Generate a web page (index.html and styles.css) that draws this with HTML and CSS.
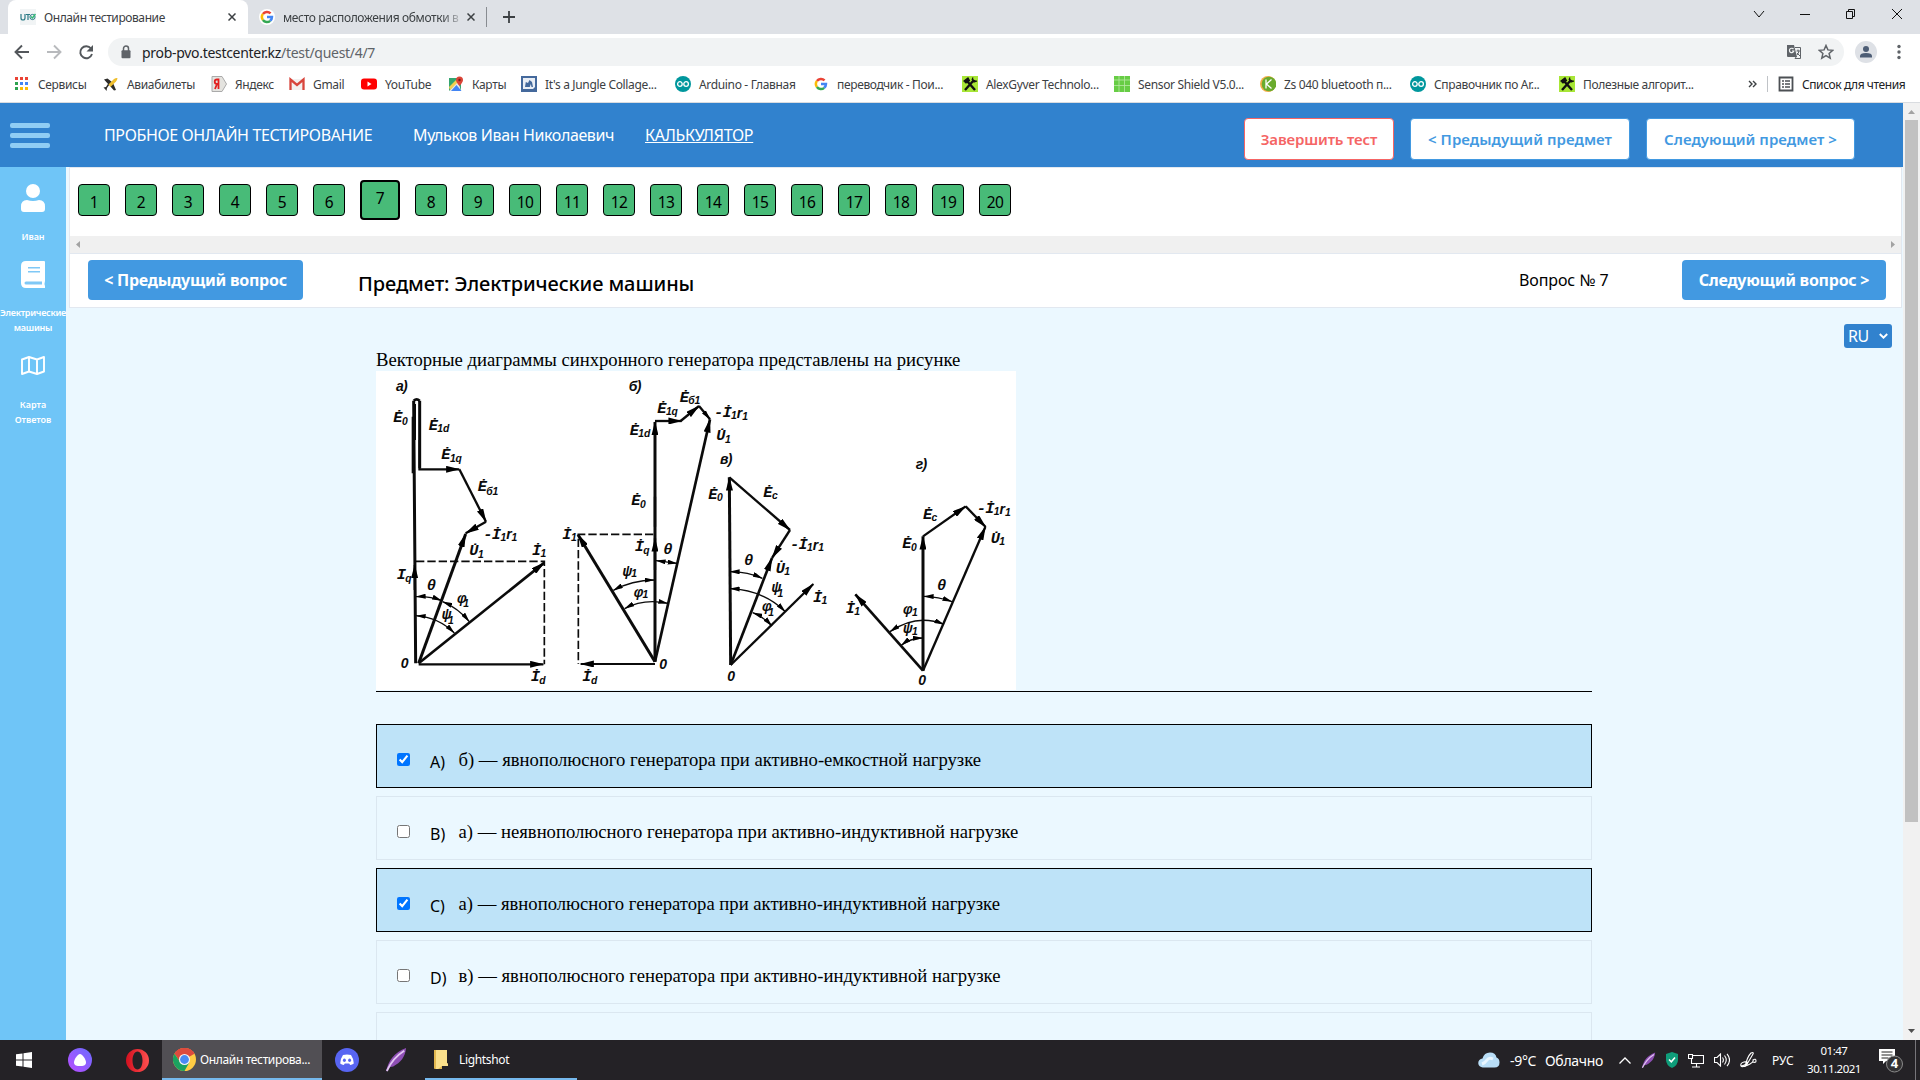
FILE: index.html
```
<!DOCTYPE html>
<html lang="ru">
<head>
<meta charset="utf-8">
<title>Онлайн тестирование</title>
<link rel="stylesheet" href="styles.css">
</head>
<body>
<svg class="defs" width="0" height="0" aria-hidden="true">
  <defs>
    <symbol id="google" viewBox="0 0 16 16"><g fill="none" stroke-width="2.8"><path d="M3.4 4.7A5.6 5.6 0 0 1 12 4" stroke="#ea4335"/><path d="M3.4 11.3A5.6 5.6 0 0 1 3.4 4.7" stroke="#fbbc05"/><path d="M11.6 12.3A5.6 5.6 0 0 1 3.4 11.3" stroke="#34a853"/><path d="M8 8h5.6a5.6 5.6 0 0 1-2 4.3" stroke="#4285f4"/></g></symbol>
    <symbol id="arduino" viewBox="0 0 16 16"><circle cx="8" cy="8" r="8" fill="#00979d"/><g fill="none" stroke="#fff" stroke-width="1.3"><circle cx="4.9" cy="8" r="2.3"/><circle cx="11.1" cy="8" r="2.3"/></g></symbol>
    <symbol id="alex" viewBox="0 0 16 16"><path fill="#a8e636" d="M0 0h16v16H0z"/><path d="M3 14L12 4M13 14L5 5" stroke="#111" stroke-width="2.4"/><path d="M2 5l4-3 1.500 2.500L4 7zM10 3l2 3 3-1M11 1.500L10 4" stroke="#111" fill="#111" stroke-width="1.200"/></symbol>
    <symbol id="feather" viewBox="0 0 24 28"><path d="M1 27C4 14 10 6 23 1c-1 10-6 16-14 20L4 22z" fill="#8e4fb4"/><path d="M2 26C7 15 13 9 21 4" stroke="#e2c6f2" stroke-width="2" fill="none"/></symbol>
    <marker id="head" markerUnits="userSpaceOnUse" viewBox="0 0 36 18" markerWidth="42" markerHeight="21" refX="34" refY="9" orient="auto-start-reverse"><path d="M0 0L36 9L0 18z"/></marker>
    <marker id="small" markerUnits="userSpaceOnUse" viewBox="0 0 28 14" markerWidth="30" markerHeight="15" refX="27" refY="7" orient="auto-start-reverse"><path d="M0 0L28 7L0 14z"/></marker>
  </defs>
</svg>
<div class="screen">
  <header class="browser">
    <div class="tabstrip">
      <div class="tab tab-active">
        <svg class="fav" viewBox="0 0 16 16"><path fill="#f1f4f5" d="M0 0h16v16H0z"/><path d="M1 5v4q0 2 2 2t2-2V5M6 5.500h4M8 5.500V11" fill="none" stroke="#2b7a86" stroke-width="1.200"/><circle cx="12.500" cy="8" r="2.600" fill="none" stroke="#2b7a86"/><path d="M11 7.500l1.500 1.500L15.500 5" fill="none" stroke="#2eb872" stroke-width="1.400"/></svg>
        <span class="tab-title t1">Онлайн тестирование</span>
        <svg class="close" viewBox="0 0 8 8"><path d="M.5.5l7 7M7.500.5l-7 7"/></svg>
      </div>
      <div class="tab tab-second">
        <svg class="fav" viewBox="-1 -1 18 18"><circle cx="8" cy="8" r="9" fill="#fff"/><use href="#google" width="16" height="16"/></svg>
        <span class="tab-title t2">место расположения обмотки в</span>
        <svg class="close" viewBox="0 0 8 8"><path d="M.5.5l7 7M7.500.5l-7 7"/></svg>
      </div>
      <span class="tab-divider"></span>
      <svg class="plus" viewBox="0 0 12 12"><path d="M6 0v12M0 6h12" stroke="#3c4043" stroke-width="1.800"/></svg>
      <svg class="winctl" viewBox="0 0 160 16"><g fill="none" stroke="#111" stroke-width="1"><path d="M7 5l5 6 5-6M53 8.500h10M99.500 5.500h6v7h-6zM101.500 5.500v-2h6v7h-2M145 3l10 10M155 3l-10 10"/></g></svg>
    </div>
    <div class="toolbar">
      <svg class="nav" viewBox="0 0 84 16"><g fill="none" stroke-width="1.900"><path d="M16 8H3M9 1.500L2.500 8 9 14.500" stroke="#53575b"/><path d="M34 8h13M41 1.500L47.500 8 41 14.500" stroke="#b8babd"/><path d="M78 4.500A6 6 0 1 0 79 10" stroke="#53575b"/></g><path d="M80 1v6.500h-6.500z" fill="#53575b"/></svg>
      <div class="omnibox">
        <svg class="lock" viewBox="0 0 10 14"><path d="M2.500 6V3.500a2.500 2.500 0 0 1 5 0V6" fill="none" stroke="#5f6368" stroke-width="1.500"/><rect x=".5" y="5.200" width="9" height="8" rx="1" fill="#5f6368"/></svg>
        <span class="url"><b>prob-pvo.testcenter.kz</b>/test/quest/4/7</span>
        <svg class="trans" viewBox="0 0 16 16"><path d="M1 1h7l3 12H2q-1 0-1-1z" fill="#5f6368"/><path d="M9 3.500h5.500v11H9l1.500-2" fill="none" stroke="#5f6368"/><path d="M7.500 5.200A2.200 2.200 0 1 0 7.800 7H6" fill="none" stroke="#f1f3f4" stroke-width="1.200"/><path d="M10.500 7H14M12 5.500V7q2 0-1 4M11 9l3 3" fill="none" stroke="#5f6368"/></svg>
        <svg class="star" viewBox="0 0 16 16"><path d="M8 1.500l1.900 4.400 4.800.4-3.600 3.200 1.100 4.700L8 11.700l-4.200 2.500 1.100-4.700L1.300 6.300l4.800-.4z" fill="none" stroke="#5f6368" stroke-width="1.500"/></svg>
      </div>
      <svg class="person" viewBox="0 0 22 22"><circle cx="11" cy="11" r="11" fill="#dee1e6"/><circle cx="11" cy="8" r="3" fill="#4d5d75"/><path d="M5 16.500v-1.500q0-3 6-3t6 3v1.500z" fill="#4d5d75"/></svg>
      <svg class="kebab" viewBox="0 0 4 16"><g fill="#5f6368"><circle cx="2" cy="2.500" r="1.700"/><circle cx="2" cy="8" r="1.700"/><circle cx="2" cy="13.500" r="1.700"/></g></svg>
    </div>
    <nav class="bookmarks">
      <div class="marks">
        <a><svg viewBox="0 0 16 16"><path d="M1 1h3v3H1zM6 1h3v3H6zM11 1h3v3h-3z" fill="#ea4335"/><path d="M1 6h3v3H1zM1 11h3v3H1z" fill="#2da24f"/><path d="M6 6h3v3H6zM11 6h3v3h-3z" fill="#4285f4"/><path d="M6 11h3v3H6zM11 11h3v3h-3z" fill="#fbbc05"/></svg><span>Сервисы</span></a>
        <a><svg viewBox="0 0 16 16"><path d="M1 3.500l3.500-1L9 6l-3 3zM10 7l3 7-2 .5L7 10zM6.500 8.500L4 12l-.5 3-1.500-2-1.500-1.500L3 11l2.500-4z" fill="#2d2c2a"/><path d="M5.500 8.500L11 3q2-1.500 3.500-1-.3 2-1.500 3.500L7.500 11z" fill="#f0bf2e"/></svg><span>Авиабилеты</span></a>
        <a><svg viewBox="0 0 16 16"><path d="M1 .5h10L15.500 8 11 15.500H1z" fill="#e4e3df" stroke="#aaa"/><path d="M7.500 13V3.500H6a2 2 0 0 0 0 4.500h1.500M6 8l-2 5" fill="none" stroke="#e21f1f" stroke-width="1.800"/></svg><span>Яндекс</span></a>
        <a><svg viewBox="0 0 16 16"><path d="M1 3h14v11H1z" fill="#f3f0ef"/><path d="M1.500 14V3.500L8 9l6.500-5.500V14" fill="none" stroke="#d8453c" stroke-width="2.300"/></svg><span>Gmail</span></a>
        <a><svg viewBox="0 0 16 16"><rect y="2.500" width="16" height="11" rx="3" fill="#f00"/><path d="M6.500 5.500l4 2.500-4 2.500z" fill="#fff"/></svg><span>YouTube</span></a>
        <a><svg viewBox="0 0 16 16"><path d="M1 2h12v13H1z" fill="#34a56f"/><path d="M1 15L10 5l3 10z" fill="#e8e8e8"/><path d="M3 15L8.500 9l5 6z" fill="#4285f4"/><path d="M1 11l8-8 2 2L2 14z" fill="#f3d04e"/><path d="M11.500 10Q8 6 8 4a3.500 3.500 0 0 1 7 0q0 2-3.500 6z" fill="#db4437"/><circle cx="11.500" cy="4" r="1.200" fill="#7c1d16"/></svg><span>Карты</span></a>
        <a><svg viewBox="0 0 16 16"><path fill="#44699c" d="M0 0h16v16H0z"/><path d="M2 2h12v9l-2 2H2z" fill="#e9eef5"/><path d="M4 11l.8-5L7 7l1.500-3L11 6l1 5h-1.500l-.7-3-1 3z" fill="#44699c"/></svg><span>It's a Jungle Collage...</span></a>
        <a><svg viewBox="0 0 16 16"><use href="#arduino"/></svg><span>Arduino - Главная</span></a>
        <a><svg viewBox="-1 -1 18 18"><use href="#google" width="16" height="16"/></svg><span>переводчик - Пои...</span></a>
        <a><svg viewBox="0 0 16 16"><use href="#alex"/></svg><span>AlexGyver Technolo...</span></a>
        <a><svg viewBox="0 0 16 16"><path fill="#67cd45" d="M0 0h16v16H0z"/><path d="M0 4h16M0 9.500h16M5 0v16M10.500 0v16" stroke="#b8e8a5" stroke-width=".8"/></svg><span>Sensor Shield V5.0...</span></a>
        <a><svg viewBox="0 0 16 16"><circle cx="8" cy="8" r="8" fill="#f2ad48"/><circle cx="9" cy="8" r="7.300" fill="#6aab2e"/><path d="M6 3.500v9M11.500 3.500L6.500 8l5 4.500" fill="none" stroke="#fff" stroke-width="1.300"/></svg><span>Zs 040 bluetooth п...</span></a>
        <a><svg viewBox="0 0 16 16"><use href="#arduino"/></svg><span>Справочник по Ar...</span></a>
        <a><svg viewBox="0 0 16 16"><use href="#alex"/></svg><span>Полезные алгорит...</span></a>
      </div>
      <svg class="more" viewBox="0 0 9 8"><path d="M1 1l3 3-3 3M5 1l3 3-3 3" fill="none" stroke="#3c4043" stroke-width="1.400"/></svg>
      <div class="reading"><svg viewBox="0 0 16 16"><path d="M1.500 1.500h13v13h-13z" fill="none" stroke="#4c5054" stroke-width="1.800"/><path d="M4 5h2M7 5h5M4 8h2M7 8h5M4 11h2M7 11h5" stroke="#4c5054" stroke-width="1.400"/></svg><span>Список для чтения</span></div>
    </nav>
  </header>

  <div class="page">
    <div class="site">
      <div class="topbar">
        <svg class="burger" viewBox="0 0 40 25"><g fill="#90cdf4"><rect width="40" height="5" rx="2"/><rect y="10" width="40" height="5" rx="2"/><rect y="20" width="40" height="5" rx="2"/></g></svg>
        <span class="brand">ПРОБНОЕ ОНЛАЙН ТЕСТИРОВАНИЕ</span>
        <span class="user">Мульков Иван Николаевич</span>
        <a class="calc">КАЛЬКУЛЯТОР</a>
        <div class="actions">
          <button class="btn finish">Завершить тест</button>
          <button class="btn prevs">&lt; Предыдущий предмет</button>
          <button class="btn nexts">Следующий предмет &gt;</button>
        </div>
      </div>
      <div class="body">
        <aside class="side">
          <svg class="s-user" viewBox="0 0 24 28"><circle cx="12" cy="7" r="7" fill="#fff"/><path d="M0 25v-2.500Q0 16 6 16q6 1.800 12 0 6 0 6 6.500V25q0 3-3 3H3q-3 0-3-3z" fill="#fff"/></svg>
          <span class="s1">Иван</span>
          <svg class="s-book" viewBox="0 0 24 27"><path d="M5 0h18q1 0 1 1v19q-1 3 0 5v2H5q-5 0-5-5V5q0-5 5-5z" fill="#fff"/><path d="M7 6.700h12M7 10.800h12" stroke="#7fc8f6" stroke-width="1.400"/><path d="M5 20.500h16v3H5q-1.500 0-1.500-1.500T5 20.500z" fill="#7fc8f6"/></svg>
          <span class="s2">Электрические<br>машины</span>
          <svg class="s-map" viewBox="0 0 24 19"><path d="M1 3.500L8 1l8 2.500L23 1v14.500L16 18l-8-2.500L1 18zM8 1v14.500M16 3.500V18" fill="none" stroke="#fff" stroke-width="1.900" stroke-linejoin="round"/></svg>
          <span class="s3">Карта<br>Ответов</span>
        </aside>
        <main class="main">
          <div class="panel">
            <div class="nums"><i>1</i><i>2</i><i>3</i><i>4</i><i>5</i><i>6</i><i class="cur">7</i><i>8</i><i>9</i><i>10</i><i>11</i><i>12</i><i>13</i><i>14</i><i>15</i><i>16</i><i>17</i><i>18</i><i>19</i><i>20</i></div>
            <div class="hscroll"><svg viewBox="0 0 4 7"><path d="M4 0v7L0 3.500z"/></svg><svg viewBox="0 0 4 7"><path d="M0 0v7l4-3.500z"/></svg></div>
            <div class="subject">
              <button class="qbtn qprev">&lt; Предыдущий вопрос</button>
              <span class="subj">Предмет: Электрические машины</span>
              <span class="qno">Вопрос № 7</span>
              <button class="qbtn qnext">Следующий вопрос &gt;</button>
            </div>
          </div>
          <div class="langrow"><div class="lang"><span>RU</span><svg viewBox="0 0 8 5"><path d="M.7.7L4 4 7.300.7" fill="none" stroke="#fff" stroke-width="1.700"/></svg></div></div>
          <section class="question">
            <p class="qtext">Векторные диаграммы синхронного генератора представлены на рисунке</p>
            <svg class="figure" viewBox="0 0 640 319">
              <path fill="#fff" d="M0 0h640v319H0z"/>
              <g transform="translate(-6 -31) scale(.33333)" class="ink">
                <path d="M137 970L131 182M149 182V385"  stroke-width="9"/>
                <path d="M131 182q9-8 18 0M129 230V400" stroke-width="8"/>
                <path d="M135 300V192M149 300V388M134 750V675" marker-end="url(#head)" stroke-width="6"/>
                <path d="M145 388H268" marker-end="url(#head)"/>
                <path d="M268 388L348 545" marker-end="url(#head)"/>
                <path d="M348 545L287 580" marker-end="url(#head)"/>
                <path d="M146 970L287 582" marker-end="url(#head)" stroke-width="9"/>
                <path d="M146 970L523 668" marker-end="url(#head)" stroke-width="8"/>
                <path d="M146 973H520" marker-end="url(#head)"/>
                <path d="M138 664H523V973" stroke-dasharray="25 9" stroke-width="5"/>
                <g class="arc"><path d="M138 770Q180 768 215 782"/><path d="M218 785Q265 805 298 845"/><path d="M138 827Q205 832 253 879"/></g>
                <path d="M855 965V246" marker-end="url(#head)" stroke-width="9"/>
                <path d="M855 560V470M855 690V595" marker-end="url(#head)"/>
                <path d="M855 243H935" marker-end="url(#head)"/>
                <path d="M932 243L987 198" marker-end="url(#head)"/>
                <path d="M987 198L1020 238" marker-end="url(#small)"/>
                <path d="M855 965L1020 238" marker-end="url(#head)" stroke-width="8"/>
                <path d="M855 965L624 584" marker-end="url(#head)" stroke-width="9"/>
                <path d="M855 972H632" marker-end="url(#head)" stroke-width="6"/>
                <path d="M850 583H625V972" stroke-dasharray="25 9" stroke-width="5"/>
                <g class="arc"><path d="M858 662L922 670"/><path d="M853 720Q785 721 730 751"/><path d="M764 806Q820 775 894 790"/></g>
                <g class="lbl">
                  <text x="78" y="152" class="z">а)</text><text x="70" y="247">Ė<tspan dy="7">0</tspan></text><text x="176" y="269">Ė<tspan dy="8">1d</tspan></text><text x="214" y="358">Ė<tspan dy="8">1q</tspan></text><text x="323" y="453">Ė<tspan dy="12">б1</tspan></text><text x="340" y="596">-İ<tspan dy="6">1</tspan><tspan class="n" dy="-6">r</tspan><tspan dy="8">1</tspan></text><text x="298" y="645">U̇<tspan dy="8">1</tspan></text><text x="486" y="644">İ<tspan dy="6">1</tspan></text><text x="80" y="717">I<tspan dy="10">q</tspan></text><text x="482" y="1024">İ<tspan dy="8">d</tspan></text>
                  <text x="170" y="750">θ</text><text x="262" y="790">φ<tspan dy="12" dx="-8">1</tspan></text><text x="216" y="836">ψ<tspan dy="15" dx="-8">1</tspan></text><text x="92" y="983" class="z">0</text>
                  <text x="776" y="154" class="z">б)</text><text x="929" y="186">Ė<tspan dy="6">б1</tspan></text><text x="862" y="218">Ė<tspan dy="8">1q</tspan></text><text x="779" y="284">Ė<tspan dy="8">1d</tspan></text><text x="784" y="496">Ė<tspan dy="8">0</tspan></text><text x="577" y="598">İ<tspan dy="6">1</tspan></text><text x="794" y="634">İ<tspan dy="8">q</tspan></text><text x="880" y="642">θ</text><text x="758" y="708">ψ<tspan dy="4">1</tspan></text><text x="792" y="770">φ<tspan dy="5">1</tspan></text><text x="868" y="986" class="z">0</text><text x="637" y="1024">İ<tspan dy="8">d</tspan></text>
                </g>
              </g>
              <g transform="translate(314 -11) scale(.33333)" class="ink">
                <path d="M122 915L118 352" marker-end="url(#head)" stroke-width="9"/>
                <path d="M118 352L300 510" marker-end="url(#head)"/>
                <path d="M300 510L246 594" marker-end="url(#head)"/>
                <path d="M122 915L246 594" marker-end="url(#head)" stroke-width="8"/>
                <path d="M122 915L370 672" marker-end="url(#head)"/>
                <path d="M699 932V529" marker-end="url(#head)" stroke-width="9"/>
                <path d="M699 529L827 439" marker-end="url(#head)"/>
                <path d="M827 439L887 501" marker-end="url(#head)"/>
                <path d="M699 932L886 501" marker-end="url(#head)"/>
                <path d="M699 932L496 703" marker-end="url(#head)" stroke-width="8"/>
                <g class="arc"><path d="M120 635Q175 636 217 655"/><path d="M120 686Q220 690 286 755"/><path d="M188 758Q220 770 246 798"/><path d="M702 709Q745 710 786 725"/><path d="M600 815Q680 760 762 793"/><path d="M634 856Q660 835 698 834"/></g>
                <g class="lbl">
                  <text x="72" y="171">-İ<tspan dy="6">1</tspan><tspan class="n" dy="-2">r</tspan><tspan dy="4">1</tspan></text><text x="79" y="241">U̇<tspan dy="8">1</tspan></text><text x="90" y="311" class="z">в)</text><text x="55" y="416">Ė<tspan dy="8">0</tspan></text><text x="220" y="410">Ė<tspan dy="8">с</tspan></text><text x="300" y="568">-İ<tspan dy="4">1</tspan><tspan class="n" dy="-2">r</tspan><tspan dy="4">1</tspan></text><text x="257" y="638">U̇<tspan dy="8">1</tspan></text><text x="162" y="615">θ</text><text x="245" y="696">ψ<tspan dy="15" dx="-8">1</tspan></text><text x="217" y="754">φ<tspan dy="13" dx="-8">1</tspan></text><text x="369" y="727">İ<tspan dy="6">1</tspan></text><text x="112" y="964" class="z">0</text>
                  <text x="677" y="328" class="z">г)</text><text x="699" y="478">Ė<tspan dy="6">с</tspan></text><text x="860" y="460">-İ<tspan dy="4">1</tspan><tspan class="n" dy="-2">r</tspan><tspan dy="5">1</tspan></text><text x="637" y="565">Ė<tspan dy="8">0</tspan></text><text x="902" y="549">U̇<tspan dy="6">1</tspan></text><text x="741" y="690">θ</text><text x="640" y="762">φ<tspan dy="5">1</tspan></text><text x="640" y="820">ψ<tspan dy="5">1</tspan></text><text x="467" y="760">İ<tspan dy="6">1</tspan></text><text x="685" y="974" class="z">0</text>
                </g>
              </g>
            </svg>
            <div class="answers">
              <label class="ans sel"><input type="checkbox" checked><span class="ltr">A)</span><span class="atext">б) — явнополюсного генератора при активно-емкостной нагрузке</span></label>
              <label class="ans"><input type="checkbox"><span class="ltr">B)</span><span class="atext">а) — неявнополюсного генератора при активно-индуктивной нагрузке</span></label>
              <label class="ans sel"><input type="checkbox" checked><span class="ltr">C)</span><span class="atext">а) — явнополюсного генератора при активно-индуктивной нагрузке</span></label>
              <label class="ans"><input type="checkbox"><span class="ltr">D)</span><span class="atext">в) — явнополюсного генератора при активно-индуктивной нагрузке</span></label>
              <div class="ans"></div>
            </div>
          </section>
        </main>
      </div>
    </div>
    <div class="vscroll"><svg viewBox="0 0 7 4"><path d="M0 4h7L3.500 0z" fill="#a3a3a3"/></svg><div class="thumb"></div><svg class="down" viewBox="0 0 7 4"><path d="M0 0h7L3.500 4z" fill="#505050"/></svg></div>
  </div>

  <footer class="taskbar">
    <div class="cell start"><svg width="16" height="16" viewBox="0 0 16 16"><path d="M0 2.300l6.500-.9v6.100H0zM7.500 1.200L16 0v7.500H7.500zM0 8.500h6.500v6.100L0 13.700zM7.500 8.500H16V16l-8.500-1.200z" fill="#fff"/></svg></div>
    <div class="cell alice"><svg width="24" height="24" viewBox="0 0 24 24"><defs><linearGradient id="al" x1="1" y1="0" x2="0" y2="1"><stop offset="0" stop-color="#6a6bff"/><stop offset="1" stop-color="#b94dff"/></linearGradient></defs><circle cx="12" cy="12" r="12" fill="url(#al)"/><path d="M12 6c2.500 0 6 5.500 6 8.500S15 18 12 18s-6-.5-6-3.500S9.500 6 12 6z" fill="#fff"/></svg></div>
    <div class="cell opera"><svg width="23" height="23" viewBox="0 0 23 23"><defs><linearGradient id="op" x1="0" y1="0" x2="1" y2="0"><stop offset="0" stop-color="#d3101f"/><stop offset="1" stop-color="#ff5050"/></linearGradient></defs><path fill-rule="evenodd" fill="url(#op)" d="M11.500 0a11.500 11.500 0 1 0 0 23 11.500 11.500 0 0 0 0-23zM11.500 2.500c3 0 5 4 5 9s-2 9-5 9-5-4-5-9 2-9 5-9z"/></svg></div>
    <div class="task active"><svg width="23" height="23" viewBox="0 0 24 24"><circle cx="12" cy="12" r="12" fill="#fc4"/><path d="M12 12L1.600 6A12 12 0 0 1 22.400 6z" fill="#dd4b3e"/><path d="M12 6h10.400A12 12 0 0 0 1.600 6L7 14z" fill="#dd4b3e"/><path d="M1.600 6A12 12 0 0 0 12 24l5-9-10-1z" fill="#1aa260"/><circle cx="12" cy="12" r="5.800" fill="#f4f4f4"/><circle cx="12" cy="12" r="4.600" fill="#4a8af4"/></svg><span>Онлайн тестирова...</span></div>
    <div class="cell discord"><svg width="24" height="24" viewBox="0 0 24 24"><circle cx="12" cy="12" r="12" fill="#5865f2"/><path d="M8 7q4-1.200 8 0 2.800 4 2.800 8.500-1.600 1.300-3.600 1.500l-1-1.600h-4.400l-1 1.600q-2-.2-3.600-1.500Q5.200 11 8 7z" fill="#fff"/><ellipse cx="9.400" cy="12.200" rx="1.500" ry="1.700" fill="#5865f2"/><ellipse cx="14.600" cy="12.200" rx="1.500" ry="1.700" fill="#5865f2"/></svg></div>
    <div class="cell fthr"><svg width="22" height="26"><use href="#feather"/></svg></div>
    <div class="task folder"><svg width="15" height="21" viewBox="0 0 15 21"><path d="M0 1h8v19H1q-1 0-1-1z" fill="#e2b850"/><path d="M2 1h11v13q1 0 1 1v2H8l-4 3H2z" fill="#fbe08b"/></svg><span>Lightshot</span></div>
    <div class="weather"><svg width="22" height="16" viewBox="0 0 22 16"><path d="M5 15.500a4.500 4.500 0 0 1-.5-9Q6 .5 12 .5q5.500 0 6.500 5 3 1 3 5 0 5-5 5z" fill="#b9def7"/><path d="M4 12q3-1 5-4t6-1" stroke="#e9f6ff" stroke-width="3" fill="none"/></svg><span class="temp">-9°C</span><span class="sky">Облачно</span></div>
    <div class="tray">
      <svg width="12" height="7" viewBox="0 0 12 7"><path d="M.5 6.500l5.500-5.500 5.500 5.500" fill="none" stroke="#fff" stroke-width="1.300"/></svg>
      <svg width="15" height="17" class="tf"><use href="#feather"/></svg>
      <svg width="12" height="16" viewBox="0 0 12 16"><path d="M6 0l6 2v6q0 5-6 8-6-3-6-8V2z" fill="#0f9d7a"/><path d="M3 7.500l2.300 2.300L9 5.500" fill="none" stroke="#fff" stroke-width="1.500"/></svg>
      <svg width="16" height="15" viewBox="0 0 16 15"><path d="M5 2.500h10.500v8H3.500V6M.5 1.500h4v4h-4zM8.500 10.500V14M4 14h8" fill="none" stroke="#fff" stroke-width="1.100"/></svg>
      <svg width="16" height="14" viewBox="0 0 16 14"><path d="M.5 4.500H3l3.500-3.500v12L3 9.500H.5zM8.500 4.500q1.800 2.500 0 5M10.500 2.500q3.500 4.500 0 9M13 .8q5 6 0 12.400" fill="none" stroke="#fff" stroke-width="1.100"/></svg>
      <svg width="17" height="16" viewBox="0 0 17 16"><path d="M5 15Q7 5 11 1q3-1 2 1L6 14M1 14q-1-3 3-4t3 1-6 3q1 2 9-2 4-2 3-4 3-2 3 1 0 2-3 1" fill="none" stroke="#fff" stroke-width="1.100"/></svg>
    </div>
    <span class="kb">РУС</span>
    <div class="clock"><span class="tm">01:47</span><span class="dt">30.11.2021</span></div>
    <svg class="notif" width="26" height="26" viewBox="0 0 26 26"><path d="M1 2h16v12H8l-3 3v-3H1z" fill="#fff"/><path d="M3.500 5h11M3.500 8h11M3.500 11h7" stroke="#222"/><circle cx="16.500" cy="17" r="8" fill="#333234" stroke="#8a8a8a"/><text x="16.500" y="21.200" text-anchor="middle">4</text></svg>
    <span class="peek"></span>
  </footer>
</div>
</body>
</html>
```
FILE: styles.css
```
* { box-sizing: border-box; }
body { margin: 0; font-family: "Noto Sans", "Open Sans", sans-serif; color: #000; overflow: hidden; }
svg { display: block; flex: none; }
.defs { position: absolute; }
button { font-family: inherit; padding: 0; white-space: nowrap; }
span { white-space: nowrap; }
.screen { width: 1920px; height: 1080px; display: flex; flex-direction: column; overflow: hidden; }

/* browser chrome */
.browser { height: 103px; background: #fff; border-bottom: 1px solid #d9dce0; font-size: 12px; color: #3c4043; flex: none; letter-spacing: -.34px; }
.tabstrip { height: 34px; background: #dee1e6; display: flex; align-items: center; padding-left: 8px; }
.tab { display: flex; align-items: center; height: 34px; }
.tab-active { width: 240px; background: #fff; border-radius: 8px 8px 0 0; padding: 0 12px; }
.tab-second { width: 238px; padding: 0 11px; }
.fav { width: 16px; height: 16px; margin-right: 8px; }
.tab-title { flex: 1; font-size: 12px; }
.t1 { letter-spacing: -.4px; }
.t2 { letter-spacing: -.37px; -webkit-mask-image: linear-gradient(90deg, #000 88%, transparent 101%); mask-image: linear-gradient(90deg, #000 88%, transparent 101%); margin-right: 4px; }
.close { width: 8px; height: 8px; fill: none; stroke: #3c4043; stroke-width: 1.500; }
.tab-divider { width: 1px; height: 20px; background: #888c91; }
.plus { width: 12px; height: 12px; margin-left: 16px; }
.winctl { width: 160px; height: 16px; margin-left: auto; margin-right: 13px; margin-bottom: 6px; }
.toolbar { height: 36px; display: flex; align-items: center; padding-left: 13px; }
.nav { width: 84px; height: 16px; }
.omnibox { margin-left: 11px; width: 1736px; height: 28px; border-radius: 14px; background: #f1f3f4; display: flex; align-items: center; padding: 0 10px 0 13px; }
.lock { width: 10px; height: 14px; margin-right: 11px; }
.url { font-size: 14px; color: #5f6368; flex: 1; letter-spacing: -.3px; }
.url b { font-weight: 400; color: #202124; }
.trans, .star { width: 16px; height: 16px; margin-left: 16px; }
.person { width: 22px; height: 22px; margin-left: 11px; }
.kebab { width: 4px; height: 16px; margin-left: 20px; }
.bookmarks { height: 28px; display: flex; align-items: center; padding-left: 14px; }
.marks { display: grid; grid-template-columns: 89px 108px 78px 72px 87px 73px 154px 138px 149px 152px 146px 150px 149px 189px; }
.marks a, .reading { display: flex; align-items: center; gap: 8px; }
.marks svg, .reading svg { width: 16px; height: 16px; }
.more { width: 9px; height: 8px; }
.reading { height: 16px; margin-left: 10px; border-left: 1px solid #c0c3c7; padding-left: 10px; color: #202124; letter-spacing: -.42px; }

/* site header */
.page { flex: 1; min-height: 0; display: flex; }
.site { width: 1903px; display: flex; flex-direction: column; background: #ebf8ff; overflow: hidden; }
.topbar { height: 64px; flex: none; background: #3182ce; display: flex; align-items: center; color: #fff; font-size: 16px; padding: 0 48px 0 10px; letter-spacing: -.38px; }
.burger { width: 40px; height: 25px; margin-right: 54px; }
.brand { width: 309px; }
.user { width: 232px; }
.calc { text-decoration: underline; letter-spacing: -.28px; }
.actions { margin: 8px 0 0 auto; display: flex; gap: 16px; }
.btn { height: 42px; border-radius: 4px; background: #fff; border: 1px solid #4299e1; color: #4299e1; font-size: 15px; font-weight: 600; letter-spacing: .05px; }
.finish { width: 150px; border-color: #f56565; color: #f56565; letter-spacing: -.15px; }
.prevs { width: 220px; }
.nexts { width: 209px; }

/* sidebar */
.body { flex: 1; display: flex; min-height: 0; }
.side { width: 66px; flex: none; background: #6fc5f7; color: #fff; display: flex; flex-direction: column; align-items: center; font-size: 9px; line-height: 15px; font-weight: 600; text-align: center; padding-top: 17px; }
.s-user { width: 24px; height: 28px; margin-bottom: 17px; }
.s-book { width: 24px; height: 27px; margin: 17px 0; }
.s-map { width: 24px; height: 19px; margin: 21px 0 22px; }
.s2 { letter-spacing: -.26px; }

/* question navigation */
.main { flex: 1; min-width: 0; padding: 0 1px 0 3px; overflow: hidden; }
.panel { border: 1px solid #e2e8f0; background: #fff; height: 141px; }
.nums { height: 68px; display: flex; align-items: center; gap: 15px; padding: 0 0 4px 8px; }
.nums i { width: 32px; height: 32px; border: 1px solid #000; border-radius: 4px; background: #48bb78; font-style: normal; font-size: 15.500px; letter-spacing: -.5px; text-align: center; line-height: 34px; }
.nums .cur { width: 40px; height: 40px; border-width: 2px; line-height: 32px; }
.hscroll { height: 17px; background: #f0f0f0; display: flex; justify-content: space-between; align-items: center; padding: 0 6px; }
.hscroll svg { width: 4px; height: 7px; fill: #a3a3a3; }
.subject { border-top: 1px solid #e2e8f0; height: 54px; display: flex; align-items: flex-start; padding: 6px 15px 0 18px; }
.qbtn { height: 40px; border: 0; border-radius: 4px; background: #4299e1; color: #fff; font-size: 16px; font-weight: 700; letter-spacing: -.25px; }
.qprev { width: 215px; }
.qnext { width: 204px; }
.subj { margin-left: 55px; font-size: 20px; font-weight: 500; line-height: 48px; flex: 1; letter-spacing: -.1px; }
.qno { width: 163px; font-size: 16px; line-height: 41px; letter-spacing: -.1px; }
.langrow { height: 40px; display: flex; justify-content: flex-end; align-items: flex-end; padding-right: 10px; }
.lang { width: 48px; height: 24px; border-radius: 3px; background: #3182ce; color: #fff; font-size: 16px; display: flex; align-items: center; justify-content: space-between; padding: 0 4px; letter-spacing: -.4px; }
.lang svg { width: 9px; height: 6px; }

/* question */
.question { margin: 0 310px 0 307px; font-family: "Liberation Serif", "Times New Roman", serif; font-size: 14pt; }
.qtext { margin: 0; height: 23px; line-height: 24px; }
.figure { width: 640px; height: 319px; }
.ink { fill: none; stroke: #0b0b0b; stroke-width: 7; }
.arc path { stroke-width: 4; marker-start: url(#small); marker-end: url(#small); }
.lbl { fill: #0b0b0b; stroke: none; }
.lbl text { font: italic 700 46px "Liberation Mono", monospace; letter-spacing: -2px; }
.lbl tspan { font: italic 700 31px "Liberation Sans", sans-serif; letter-spacing: 0; }
.lbl .n { font-size: 42px; }
.lbl .z { font: italic 700 42px "Liberation Sans", sans-serif; }
.answers { margin-top: 1px; border-top: 1px solid #000; padding-top: 32px; display: flex; flex-direction: column; gap: 8px; }
.ans { height: 64px; flex: none; border: 1px solid #dbe7f0; display: flex; align-items: center; padding-left: 20px; }
.sel { background: #bee3f8; border-color: #000; }
.ans input { margin: 7px 20px 0 0; width: 13px; height: 13px; }
.ltr { font-family: "Noto Sans", sans-serif; font-size: 16px; width: 28.500px; padding-top: 11px; }
.atext { padding-top: 7px; }

/* page scrollbar */
.vscroll { width: 17px; background: #f1f1f1; display: flex; flex-direction: column; align-items: center; padding: 7px 0; }
.vscroll svg { width: 7px; height: 4px; }
.thumb { width: 13px; height: 702px; background: #c1c1c1; margin-top: 6px; }
.down { margin-top: auto; }

/* taskbar */
.taskbar { height: 40px; flex: none; background: #242226; color: #fff; display: flex; font-size: 12px; align-items: center; }
.cell { display: flex; justify-content: center; align-items: center; height: 40px; }
.start { width: 48px; }
.alice { width: 64px; }
.opera { width: 50px; }
.discord { width: 50px; }
.fthr { width: 48px; }
.task { height: 40px; display: flex; align-items: center; border-bottom: 2px solid #76b9ed; letter-spacing: -.35px; }
.active { width: 160px; background: #514f54; padding-left: 11px; gap: 4px; }
.folder { margin-left: 5px; width: 152px; padding-left: 9px; gap: 10px; }
.weather { margin-left: auto; display: flex; align-items: center; width: 141px; font-size: 14px; letter-spacing: -.3px; }
.temp { margin-left: 10px; width: 35px; }
.tray { display: flex; align-items: center; width: 153px; gap: 10px; }
.kb { width: 35px; }
.clock { width: 71px; display: flex; flex-direction: column; font-size: 11.500px; letter-spacing: -.5px; line-height: 18px; padding-right: 17px; align-items: center; }
.notif text { font: 700 13px "Noto Sans", sans-serif; fill: #fff; }
.peek { width: 1px; height: 40px; background: #77757a; margin: 0 4px 0 11px; }
```
